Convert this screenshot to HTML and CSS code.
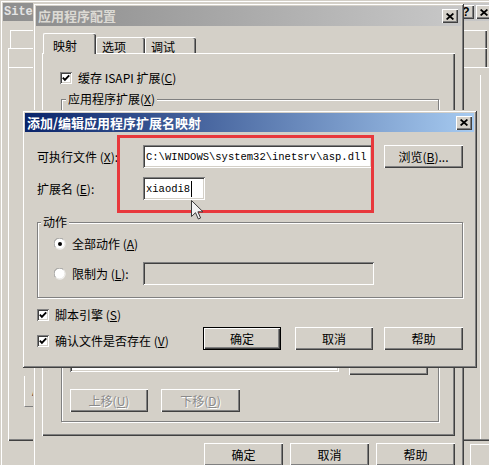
FILE: index.html
```html
<!DOCTYPE html>
<html lang="zh-CN">
<head>
<meta charset="utf-8">
<title>添加/编辑应用程序扩展名映射</title>
<link rel="stylesheet" href="styles.css">
</head>
<body>
<div class="desk">

  <!-- back window: Site properties -->
  <div class="win back">
    <div class="title title-off back-title">
      <span class="site-text">Site</span>
      <div class="ctrls">
        <span class="cbtn help">?</span>
        <span class="cbtn"><svg class="x-ico" viewBox="0 0 8 7" width="8" height="7"><path d="M0.6 0.5L7.4 6.5M7.4 0.5L0.6 6.5" stroke="#000" stroke-width="1.7" fill="none"/></svg></span>
      </div>
    </div>
    <div class="back-tabrow1"></div>
    <div class="back-tabrow2"></div>
    <div class="back-panel">
      <div class="back-frag"><span>/</span></div>
      <div class="back-vline"></div>
    </div>
    <div class="back-btns"><span class="btn"></span></div>
  </div>

  <!-- middle window: 应用程序配置 -->
  <div class="win mid">
    <div class="title title-off mid-title">
      <span class="title-text">应用程序配置</span>
      <div class="ctrls">
        <span class="cbtn"><svg class="x-ico" viewBox="0 0 8 7" width="8" height="7"><path d="M0.6 0.5L7.4 6.5M7.4 0.5L0.6 6.5" stroke="#000" stroke-width="1.7" fill="none"/></svg></span>
      </div>
    </div>
    <div class="mid-body">
      <div class="tabs">
        <span class="tab tab-on t1">映射</span>
        <span class="tab t2">选项</span>
        <span class="tab t3">调试</span>
      </div>
      <div class="panel">
        <div class="chk chk-cache">
          <span class="box"><svg viewBox="0 0 12 12" width="12" height="12"><path d="M2.8 5.6L4.9 7.8L9.2 3.4" stroke="#000" stroke-width="1.9" fill="none"/></svg></span>
          <span>缓存 ISAPI 扩展(<u>C</u>)</span>
        </div>
        <div class="group g-ext">
          <span class="glabel">应用程序扩展(<u>X</u>)</span>
          <div class="listview"></div>
          <div class="wild-row">
            <div class="wild-list"></div>
            <span class="btn wild-btn"></span>
          </div>
          <div class="move-row">
            <span class="btn dis">上移(<u>U</u>)</span>
            <span class="btn dis">下移(<u>D</u>)</span>
          </div>
        </div>
      </div>
      <div class="btnrow">
        <span class="btn">确定</span>
        <span class="btn">取消</span>
        <span class="btn">帮助</span>
      </div>
    </div>
  </div>

  <!-- front dialog -->
  <div class="win dlg">
    <div class="title title-on dlg-title">
      <span class="title-text">添加/编辑应用程序扩展名映射</span>
      <div class="ctrls">
        <span class="cbtn"><svg class="x-ico" viewBox="0 0 8 7" width="8" height="7"><path d="M0.6 0.5L7.4 6.5M7.4 0.5L0.6 6.5" stroke="#000" stroke-width="1.7" fill="none"/></svg></span>
      </div>
    </div>
    <div class="dlg-body">
      <div class="row">
        <span class="lbl">可执行文件 (<u>X</u>):</span>
        <span class="edit edit-exe">C:\WINDOWS\system32\inetsrv\asp.dll</span>
        <span class="btn browse">浏览(<u>B</u>)...</span>
      </div>
      <div class="row row2">
        <span class="lbl">扩展名 (<u>E</u>):</span>
        <span class="edit edit-ext">xiaodi8<span class="caret"></span></span>
      </div>
      <div class="group g-act">
        <span class="glabel">动作</span>
        <div class="radio-row r1">
          <svg class="radio" viewBox="0 0 12 12" width="12" height="12"><circle cx="6" cy="6" r="5.5" fill="#fff"/><path d="M1.6 9.4A5.5 5.5 0 0 1 9.4 1.6" stroke="#9a9a9a" fill="none"/><path d="M9.4 1.6A5.5 5.5 0 0 1 1.6 9.4" stroke="#e6e4e0" fill="none"/><circle cx="6" cy="6" r="2" fill="#000"/></svg>
          <span>全部动作 (<u>A</u>)</span>
        </div>
        <div class="radio-row r2">
          <svg class="radio" viewBox="0 0 12 12" width="12" height="12"><circle cx="6" cy="6" r="5.5" fill="#fff"/><path d="M1.6 9.4A5.5 5.5 0 0 1 9.4 1.6" stroke="#9a9a9a" fill="none"/><path d="M9.4 1.6A5.5 5.5 0 0 1 1.6 9.4" stroke="#e6e4e0" fill="none"/></svg>
          <span class="r2-text">限制为 (<u>L</u>):</span>
          <span class="edit edit-dis"></span>
        </div>
      </div>
      <div class="dlg-bottom">
        <div class="checks">
          <div class="chk">
            <span class="box"><svg viewBox="0 0 12 12" width="12" height="12"><path d="M2.8 5.6L4.9 7.8L9.2 3.4" stroke="#000" stroke-width="1.9" fill="none"/></svg></span>
            <span>脚本引擎 (<u>S</u>)</span>
          </div>
          <div class="chk chk2">
            <span class="box"><svg viewBox="0 0 12 12" width="12" height="12"><path d="M2.8 5.6L4.9 7.8L9.2 3.4" stroke="#000" stroke-width="1.9" fill="none"/></svg></span>
            <span>确认文件是否存在 (<u>V</u>)</span>
          </div>
        </div>
        <div class="dlg-btns">
          <span class="btn btn-def">确定</span>
          <span class="btn b-cancel">取消</span>
          <span class="btn b-help">帮助</span>
        </div>
      </div>
    </div>
  </div>

  <!-- annotation and pointer overlays -->
  <div class="mark"></div>
  <svg class="pointer" viewBox="0 0 13 20" width="13" height="20"><path d="M0.5 0.5L0.5 16.5L4.5 12.7L7.3 19L9.6 18L6.9 11.8L12 11.8Z" fill="#f2f2f2" stroke="#3a3a3a" stroke-width="1" stroke-linejoin="round"/></svg>
</div>
</body>
</html>
```

FILE: styles.css
```css
* { box-sizing: border-box; }
html, body { margin: 0; padding: 0; }
body {
  width: 489px;
  height: 465px;
  overflow: hidden;
  background: #d4d0c8;
  font-family: "Noto Sans CJK SC", "Noto Sans", sans-serif;
  font-size: 12px;
  line-height: 14px;
  color: #000;
}
u { text-decoration: underline; text-underline-offset: 1px; }

.desk { position: relative; width: 489px; height: 465px; overflow: hidden; }

/* windows */
.win {
  position: absolute;
  background: #d4d0c8;
  padding: 3px;
  box-shadow: inset 1px 1px #d4d0c8, inset -1px -1px #404040, inset 2px 2px #fff, inset -2px -2px #808080;
}
.back { left: 0; top: 0; width: 497px; height: 490px; }
.mid { left: 33px; top: 3px; width: 431px; height: 490px; }
.dlg { left: 22px; top: 110px; width: 455px; height: 258px; }

/* title bars */
.title { display: flex; align-items: center; padding: 0 2px; }
.title-off { background: linear-gradient(to right, #8e8e8e, #c8c8c8); color: #dcdad4; }
.title-on { background: linear-gradient(to right, #0a246a, #a6caf0); color: #fff; }
.back-title { height: 18px; padding: 0 2px 0 1px; }
.mid-title { height: 20px; padding: 0 3px 0 2px; }
.dlg-title { height: 19px; padding: 0 2px 0 2px; }
.title-text { font-weight: bold; font-size: 13px; line-height: 18px; white-space: nowrap; }
.site-text { font-family: "Liberation Mono", monospace; font-weight: bold; font-size: 12px; color: #e4e4e4; }
.ctrls { margin-left: auto; display: flex; gap: 2px; }
.cbtn {
  width: 16px;
  height: 14px;
  display: flex;
  align-items: center;
  justify-content: center;
  background: #d4d0c8;
  color: #000;
  box-shadow: inset 1px 1px #fff, inset -1px -1px #404040, inset -2px -2px #808080;
}
.help { font-family: "Liberation Sans", sans-serif; font-weight: bold; font-size: 12px; line-height: 12px; }

/* back window fragments */
.back-tabrow1 {
  margin: 9px 0 0 7px;
  width: 477px;
  height: 18px;
  border-top: 1px solid #fff;
  border-left: 1px solid #fff;
  box-shadow: inset -1px 0 #404040, inset -2px 0 #808080;
}
.back-tabrow2 {
  margin-left: 5px;
  width: 479px;
  height: 19px;
  border-top: 1px solid #fff;
  border-left: 1px solid #fff;
  box-shadow: inset -1px 0 #404040, inset -2px 0 #808080;
}
.back-panel {
  margin-left: 5px;
  width: 500px;
  height: 374px;
  display: flex;
  align-items: flex-start;
  box-shadow: inset 1px 1px #fff, inset 0 -1px #404040, inset 0 -2px #808080;
}
.back-frag {
  margin: 309px 0 0 16px;
  width: 40px;
  height: 31px;
  padding: 6px 0 0 7px;
  border-left: 1px solid #fff;
  border-bottom: 1px solid #808080;
  color: #222;
}
.back-vline {
  align-self: stretch;
  margin: 8px 0 2px 416px;
  width: 10px;
  border-left: 1px solid #fff;
}
.back-btns { display: flex; margin: 3px 0 0 467px; }

/* middle window */
.mid-body { padding: 0 6px; }
.tabs {
  display: flex;
  align-items: flex-end;
  height: 20px;
  margin-top: 7px;
  padding-left: 1px;
  position: relative;
  z-index: 1;
}
.tab {
  height: 16px;
  padding: 2px 0 0 5px;
  border-top: 1px solid #fff;
  border-left: 1px solid #fff;
  border-radius: 2px 2px 0 0;
  box-shadow: inset -1px 0 #404040, inset -2px 0 #808080;
}
.tab-on {
  height: 21px;
  margin-bottom: -1px;
  padding: 5px 0 0 9px;
  background: #d4d0c8;
}
.t1 { width: 53px; }
.t2 { width: 49px; }
.t3 { width: 51px; }

.panel {
  width: 413px;
  height: 383px;
  display: flex;
  flex-direction: column;
  align-items: flex-start;
  box-shadow: inset 1px 1px #fff, inset -1px -1px #404040, inset -2px -2px #808080;
}

/* checkbox */
.chk { display: flex; align-items: center; gap: 6px; height: 14px; white-space: nowrap; }
.box {
  width: 12px;
  height: 12px;
  background: #fff;
  display: block;
  box-shadow: inset 1px 1px #808080, inset -1px -1px #fff, inset 2px 2px #404040, inset -2px -2px #d4d0c8;
}
.box svg { display: block; }
.chk-cache { margin: 18px 0 0 18px; }

/* etched group boxes */
.group {
  border: 1px solid #808080;
  box-shadow: inset 1px 1px #fff, 1px 1px #fff;
  display: flex;
  flex-direction: column;
  align-items: flex-start;
}
.glabel {
  margin-top: -8px;
  padding: 0 2px;
  background: #d4d0c8;
  line-height: 14px;
  white-space: nowrap;
}
.g-ext { margin: 14px 0 0 19px; width: 378px; padding-bottom: 9px; }
.g-ext .glabel { margin-left: 4px; }

.listview {
  margin: 6px 0 0 8px;
  width: 357px;
  height: 150px;
  background: #fff;
  box-shadow: inset 1px 1px #808080, inset -1px -1px #fff, inset 2px 2px #404040, inset -2px -2px #d4d0c8;
}
.wild-row { display: flex; align-items: flex-start; margin: 30px 0 0 8px; }
.wild-list {
  width: 269px;
  height: 80px;
  background: #fff;
  box-shadow: inset 1px 1px #808080, inset -1px -1px #fff, inset 2px 2px #404040, inset -2px -2px #d4d0c8;
}
.btn.wild-btn { margin: 60px 0 0 10px; width: 79px; }
.move-row { display: flex; gap: 13px; margin: 14px 0 0 8px; }
.move-row .btn { width: 78px; }
.move-row .btn + .btn { width: 79px; }

/* buttons */
.btn {
  display: flex;
  align-items: center;
  justify-content: center;
  width: 79px;
  height: 23px;
  background: #d4d0c8;
  white-space: nowrap;
  box-shadow: inset 1px 1px #fff, inset -1px -1px #404040, inset -2px -2px #808080;
}
.btn-def {
  box-shadow: inset 0 0 0 1px #000, inset 2px 2px #fff, inset -2px -2px #404040, inset -3px -3px #808080;
}
.dis { color: #8a8a8a; text-shadow: 1px 1px #fff; }
.btnrow { display: flex; justify-content: flex-end; gap: 7px; margin-top: 7px; }

/* dialog body */
.dlg-body { padding: 13px 11px 0 12px; }
.row { display: flex; align-items: center; height: 23px; }
.row2 { margin-top: 9px; }
.lbl { width: 106px; white-space: nowrap; }
.edit {
  display: flex;
  align-items: center;
  height: 23px;
  padding-left: 3px;
  background: #fff;
  font-family: "Liberation Mono", monospace;
  font-size: 10.5px;
  white-space: nowrap;
  box-shadow: inset 1px 1px #808080, inset -1px -1px #fff, inset 2px 2px #404040, inset -2px -2px #d4d0c8;
}
.edit-exe { width: 229px; }
.edit-ext { width: 62px; }
.caret { display: inline-block; width: 1px; height: 16px; background: #000; margin-left: 1px; }
.browse { margin-left: 12px; }

.g-act { margin-top: 22px; width: 426px; padding-bottom: 12px; }
.g-act .glabel { margin-left: 3px; }
.radio-row { display: flex; align-items: center; margin-left: 16px; white-space: nowrap; }
.radio { display: block; margin-right: 6px; flex: none; }
.r1 { height: 20px; margin-top: 5px; }
.r2 { height: 23px; margin-top: 8px; }
.r2-text { width: 71px; }
.edit-dis { width: 231px; height: 23px; background: #d4d0c8; }

.dlg-bottom { display: flex; align-items: flex-start; margin-top: 10px; }
.checks { display: flex; flex-direction: column; }
.chk2 { margin-top: 12px; }
.dlg-btns { display: flex; margin: 19px 0 0 auto; }
.dlg-btns .btn { width: 78px; }
.dlg-btns .b-cancel { margin-left: 14px; }
.dlg-btns .b-help { margin-left: 11px; width: 79px; }

/* overlays */
.mark {
  position: absolute;
  left: 117px;
  top: 135px;
  width: 257px;
  height: 78px;
  border: 3px solid #e8383c;
}
.pointer { position: absolute; left: 191px; top: 200px; display: block; }
```
